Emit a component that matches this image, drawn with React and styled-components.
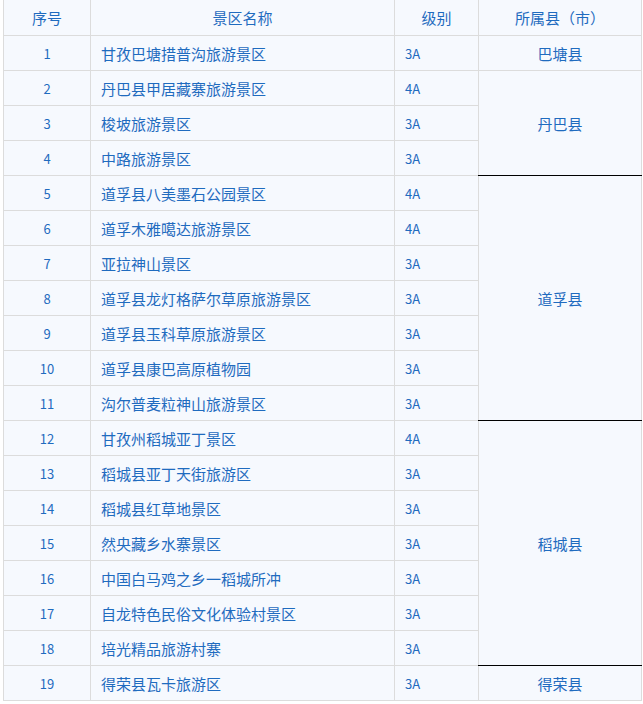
import styled, { createGlobalStyle } from "styled-components";

const GlobalStyle = createGlobalStyle`
  html, body {
    margin: 0;
    padding: 0;
    background: #fff;
  }
  body {
    font-family: "Noto Sans CJK SC", "Noto Sans", sans-serif;
  }
`;

const Page = styled.div`
  padding-left: 3px;
  margin-top: -1px;
`;

const Table = styled.table`
  border-collapse: collapse;
  table-layout: fixed;
  width: 638px;
  background: #f6f9fe;
  color: #1f6bbf;
  font-size: 15px;
`;

const Head = styled.th`
  height: 35px;
  padding: 0;
  font-weight: 400;
  font-size: 15px;
  text-align: center;
  border: 1px solid #dcdcdc;
`;

const Cell = styled.td`
  height: 34px;
  padding: 0 ${(p) => (p.$align === "left" ? "10px" : "0")};
  text-align: ${(p) => p.$align || "center"};
  font-size: ${(p) => (p.$small ? "13px" : "15px")};
  border: 1px solid #dcdcdc;
  white-space: nowrap;
  vertical-align: middle;
  line-height: 1;
`;

const County = styled(Cell)`
  border-top-color: ${(p) => (p.$top ? "#000" : "#dcdcdc")};
  border-bottom-color: ${(p) => (p.$bottom ? "#000" : "#dcdcdc")};
`;

const groups = [
  { county: "巴塘县", rows: [["甘孜巴塘措普沟旅游景区", "3A"]] },
  {
    county: "丹巴县",
    bottom: true,
    rows: [
      ["丹巴县甲居藏寨旅游景区", "4A"],
      ["梭坡旅游景区", "3A"],
      ["中路旅游景区", "3A"],
    ],
  },
  {
    county: "道孚县",
    top: true,
    bottom: true,
    rows: [
      ["道孚县八美墨石公园景区", "4A"],
      ["道孚木雅噶达旅游景区", "4A"],
      ["亚拉神山景区", "3A"],
      ["道孚县龙灯格萨尔草原旅游景区", "3A"],
      ["道孚县玉科草原旅游景区", "3A"],
      ["道孚县康巴高原植物园", "3A"],
      ["沟尔普麦粒神山旅游景区", "3A"],
    ],
  },
  {
    county: "稻城县",
    top: true,
    bottom: true,
    rows: [
      ["甘孜州稻城亚丁景区", "4A"],
      ["稻城县亚丁天街旅游区", "3A"],
      ["稻城县红草地景区", "3A"],
      ["然央藏乡水寨景区", "3A"],
      ["中国白马鸡之乡一稻城所冲", "3A"],
      ["自龙特色民俗文化体验村景区", "3A"],
      ["培光精品旅游村寨", "3A"],
    ],
  },
  { county: "得荣县", top: true, rows: [["得荣县瓦卡旅游区", "3A"]] },
];

function App() {
  let n = 0;
  return (
    <Page>
      <GlobalStyle />
      <Table>
        <colgroup>
          <col style={{ width: 87 }} />
          <col style={{ width: 304 }} />
          <col style={{ width: 84 }} />
          <col style={{ width: 163 }} />
        </colgroup>
        <thead>
          <tr>
            <Head>序号</Head>
            <Head>景区名称</Head>
            <Head>级别</Head>
            <Head>所属县（市）</Head>
          </tr>
        </thead>
        <tbody>
          {groups.map((g) =>
            g.rows.map(([name, level], i) => {
              n += 1;
              return (
                <tr key={n}>
                  <Cell $small>{n}</Cell>
                  <Cell $align="left">{name}</Cell>
                  <Cell $align="left" $small>
                    {level}
                  </Cell>
                  {i === 0 && (
                    <County rowSpan={g.rows.length} $top={g.top} $bottom={g.bottom}>
                      {g.county}
                    </County>
                  )}
                </tr>
              );
            })
          )}
        </tbody>
      </Table>
    </Page>
  );
}

export default App;
